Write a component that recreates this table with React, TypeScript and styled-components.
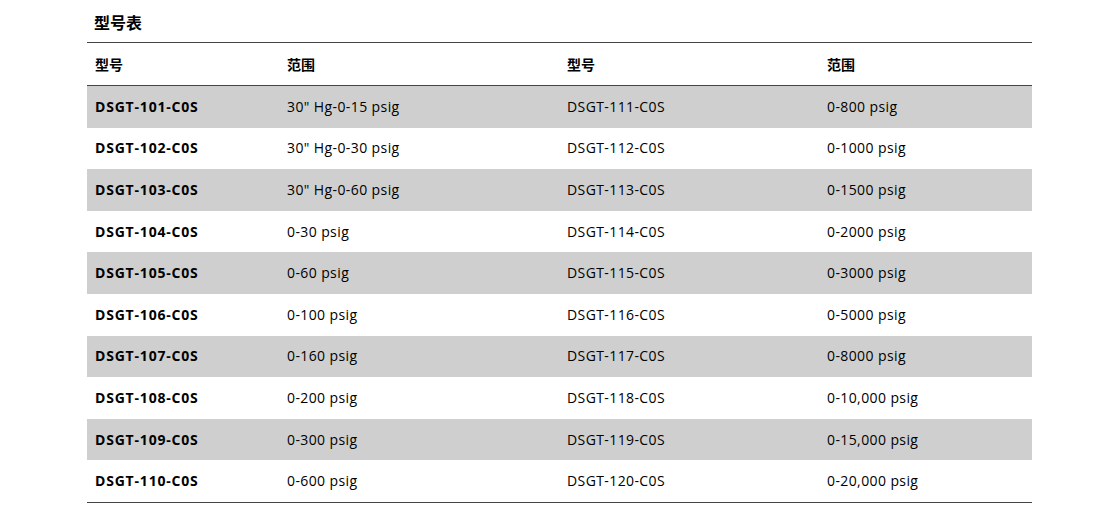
import React from "react";
import styled, { createGlobalStyle } from "styled-components";

const Global = createGlobalStyle`
  html, body { margin: 0; padding: 0; background: #fff; }
  body {
    font-family: "Open Sans", "Noto Sans CJK SC", sans-serif;
    color: #111;
  }
`;

const Page = styled.div`
  width: 945px;
  margin-left: 87px;
`;

const Title = styled.h3`
  margin: 0;
  height: 42px;
  box-sizing: border-box;
  padding: 13px 0 0 7px;
  font-size: 16px;
  line-height: 18px;
  font-weight: bold;
  font-family: "Noto Sans CJK SC", sans-serif;
  color: #000;
`;

const Table = styled.div`
  border-top: 1px solid #444;
  border-bottom: 1px solid #444;
`;

const Row = styled.div<{ $shaded?: boolean; $head?: boolean }>`
  display: grid;
  grid-template-columns: 192px 280px 260px 1fr;
  align-items: center;
  height: ${(p) => (p.$head ? "42px" : "41.6px")};
  background: ${(p) => (p.$shaded ? "#cfcfcf" : "#fff")};
  border-bottom: ${(p) => (p.$head ? "1px solid #444" : "none")};
`;

const Cell = styled.div<{ $bold?: boolean; $cjk?: boolean }>`
  padding-left: 8px;
  font-size: 14px;
  line-height: 18px;
  font-weight: ${(p) => (p.$bold ? 700 : 400)};
  font-family: ${(p) =>
    p.$cjk ? '"Noto Sans CJK SC", sans-serif' : '"Open Sans", "Noto Sans CJK SC", sans-serif'};
  color: #000;
  white-space: nowrap;
  letter-spacing: ${(p) => (p.$cjk ? "0" : p.$bold ? "0.8px" : "0.4px")};
`;

const rows: [string, string, string, string][] = [
  ["DSGT-101-C0S", '30" Hg-0-15 psig', "DSGT-111-C0S", "0-800 psig"],
  ["DSGT-102-C0S", '30" Hg-0-30 psig', "DSGT-112-C0S", "0-1000 psig"],
  ["DSGT-103-C0S", '30" Hg-0-60 psig', "DSGT-113-C0S", "0-1500 psig"],
  ["DSGT-104-C0S", "0-30 psig", "DSGT-114-C0S", "0-2000 psig"],
  ["DSGT-105-C0S", "0-60 psig", "DSGT-115-C0S", "0-3000 psig"],
  ["DSGT-106-C0S", "0-100 psig", "DSGT-116-C0S", "0-5000 psig"],
  ["DSGT-107-C0S", "0-160 psig", "DSGT-117-C0S", "0-8000 psig"],
  ["DSGT-108-C0S", "0-200 psig", "DSGT-118-C0S", "0-10,000 psig"],
  ["DSGT-109-C0S", "0-300 psig", "DSGT-119-C0S", "0-15,000 psig"],
  ["DSGT-110-C0S", "0-600 psig", "DSGT-120-C0S", "0-20,000 psig"],
];

export default function App() {
  return (
    <>
      <Global />
      <Page>
        <Title>型号表</Title>
        <Table>
          <Row $head>
            <Cell $bold $cjk>型号</Cell>
            <Cell $bold $cjk>范围</Cell>
            <Cell $bold $cjk>型号</Cell>
            <Cell $bold $cjk>范围</Cell>
          </Row>
          {rows.map((r, i) => (
            <Row key={r[0]} $shaded={i % 2 === 0}>
              <Cell $bold>{r[0]}</Cell>
              <Cell>{r[1]}</Cell>
              <Cell>{r[2]}</Cell>
              <Cell>{r[3]}</Cell>
            </Row>
          ))}
        </Table>
      </Page>
    </>
  );
}
